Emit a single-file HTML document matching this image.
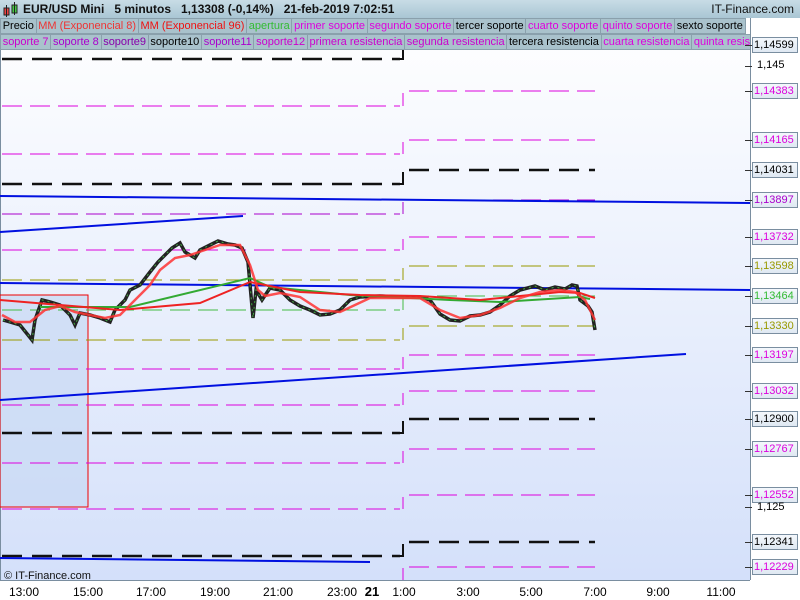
<!DOCTYPE html>
<html><head><meta charset="utf-8"><style>
*{margin:0;padding:0;box-sizing:border-box}
body{width:800px;height:600px;overflow:hidden;background:#fff;font-family:"Liberation Sans",sans-serif;position:relative}
#hdr{position:absolute;left:0;top:0;width:800px;height:18px;background:linear-gradient(#c8dce6,#a9c6d4);font-size:12px;font-weight:bold;color:#111}
#hdr .t{position:absolute;left:23px;top:2px;white-space:pre}
#hdr .r{position:absolute;right:6px;top:2px;font-weight:normal}
.row{position:absolute;left:0;height:16px;display:flex;font-size:11px}
.row span{border:1px solid #8aa0ac;background:#a9c2cc;padding:0 1.7px;line-height:14px;margin-right:-1px;white-space:nowrap}
.ax{position:absolute;left:752px;width:46px;height:16px;border:1px solid #7a8ea0;background:linear-gradient(#f4f8fc,#dfe8f2);font-size:11px;line-height:14px;padding-left:1px}
.tk{position:absolute;left:745px;width:7px;height:1px;background:#333}
.tl{position:absolute;top:585px;font-size:12px;transform:translateX(-50%)}
</style></head><body>
<div id="hdr">
<svg style="position:absolute;left:3px;top:2px" width="16" height="16"><rect x="1" y="6" width="5" height="7" fill="#e44" stroke="#222"/><line x1="3.5" y1="3" x2="3.5" y2="15" stroke="#222"/><rect x="9" y="3" width="5" height="8" fill="#4c4" stroke="#222"/><line x1="11.5" y1="0" x2="11.5" y2="13" stroke="#222"/></svg>
<div class="t">EUR/USD Mini   5 minutos   1,13308 (-0,14%)   21-feb-2019 7:02:51</div>
<div class="r">IT-Finance.com</div></div>
<svg style="position:absolute;left:0;top:18px" width="800" height="582">
<defs><linearGradient id="bg" x1="0" y1="0" x2="0" y2="1"><stop offset="0" stop-color="#ffffff"/><stop offset="1" stop-color="#d4e0fa"/></linearGradient></defs>
<rect x="0" y="0" width="750" height="562" fill="url(#bg)"/>
<line x1="0.5" y1="0" x2="0.5" y2="562" stroke="#7a8ea0"/>
<line x1="750.5" y1="0" x2="750.5" y2="562" stroke="#7a8ea0"/>
<line x1="0" y1="562.5" x2="750" y2="562.5" stroke="#7a8ea0"/>
<g transform="translate(0,-18)">
<rect x="0" y="295" width="88" height="212" fill="#c8d8f4" fill-opacity="0.7" stroke="#e00" stroke-width="1"/>
<g fill="none">
<g stroke="#111" stroke-width="2.5" stroke-dasharray="20 10"><path d="M2 59H400M2 184H400M2 433H400M2 556H400"/></g>
<g stroke="#d0d" stroke-width="1" stroke-dasharray="20 8"><path d="M2 106H400M2 154H400M2 250H400M2 369H400M2 405H400M2 463H400M2 509H400"/></g>
<path d="M2 214H400" stroke="#a0c" stroke-dasharray="20 8"/>
<path d="M2 280H400M2 340H400" stroke="#990" stroke-dasharray="20 8"/>
<path d="M2 310H400" stroke="#4b4" stroke-dasharray="20 8"/>
<g stroke="#111" stroke-width="2"><path d="M396 59H403V47M396 184H403V172M396 433H403V421M396 556H403V544"/></g>
<g stroke="#d0d"><path d="M403 106V93M403 154V142M403 250V239M403 369V357M403 405V393M403 463V451M403 509V497M403 580V568"/></g>
<path d="M403 280V268M403 340V328" stroke="#990"/><path d="M403 310V298" stroke="#4b4"/><path d="M403 214V202" stroke="#a0c"/>
<g stroke="#111" stroke-width="2.5" stroke-dasharray="20 10"><path d="M409 45H595M409 170H595M409 419H595M409 542H595"/></g>
<g stroke="#d0d" stroke-dasharray="20 8"><path d="M409 91H595M409 140H595M409 237H595M409 355H595M409 391H595M409 449H595M409 495H595M409 567H595"/></g>
<path d="M409 200H595" stroke="#a0c" stroke-dasharray="20 8"/>
<path d="M409 266H595M409 326H595" stroke="#990" stroke-dasharray="20 8"/>
<path d="M409 296H595" stroke="#4b4" stroke-dasharray="20 8"/>
<g stroke="#0010e0" stroke-width="2"><path d="M0 196L750 203M0 232L243 216M0 283L750 290M0 400L686 354M0 558L370 562"/></g>
<path d="M3 320L10 322L20 325L28 335L32 340L35 320L42 300L50 302L60 305L70 315L75 325L80 313L90 315L100 318L110 322L115 310L125 300L130 290L140 285L150 272L158 262L165 255L172 248L180 243L185 252L195 258L200 250L210 245L218 241L228 244L235 245L242 248L248 262L253 318L256 290L262 300L270 288L280 290L290 300L300 306L310 310L320 315L330 314L340 310L350 300L360 297L380 296L400 297L420 297L430 300L440 314L450 320L460 321L470 316L480 315L490 312L500 305L510 296L520 290L535 286L545 290L555 287L565 289L572 285L577 286L580 300L588 306L592 312L595 330" stroke="#222" stroke-width="3.5"/>
<path d="M3 320L10 322L20 325L28 335L32 340L35 320L42 300L50 302L60 305L70 315L75 325L80 313L90 315L100 318L110 322L115 310L125 300L130 290L140 285L150 272L158 262L165 255L172 248L180 243L185 252L195 258L200 250L210 245L218 241L228 244L235 245L242 248L248 262L253 318L256 290L262 300L270 288L280 290L290 300L300 306L310 310L320 315L330 314L340 310L350 300L360 297L380 296L400 297L420 297L430 300L440 314L450 320L460 321L470 316L480 315L490 312L500 305L510 296L520 290L535 286L545 290L555 287L565 289L572 285L577 286L580 300L588 306L592 312L595 330" stroke="#4a4" stroke-width="1" stroke-dasharray="2 4"/>
<path d="M40 307L130 307L250 278L270 287L350 295L450 300L500 302L580 297L590 299" stroke="#3a3" stroke-width="2"/>
<path d="M0 300L60 305L120 310L200 303L250 282L300 292L360 295L420 296L480 300L520 296L560 292L580 293L595 298" stroke="#e22" stroke-width="2"/>
<path d="M2 315L15 322L30 322L45 310L60 306L75 312L90 315L105 318L120 315L135 300L150 285L160 270L175 258L190 255L205 250L220 245L240 245L250 265L258 290L265 296L280 293L300 297L320 310L340 312L355 305L370 298L400 298L420 298L440 310L460 318L480 315L500 308L520 298L540 292L560 290L575 292L585 300L595 320" stroke="#f33" stroke-width="2.5" stroke-opacity="0.85"/>
</g>
</g>
<text x="4" y="561" font-size="11" fill="#111" font-family="Liberation Sans">© IT-Finance.com</text>
</g>
</svg>
<div class="row" style="top:18px"><span>Precio</span><span style="color:#e33">MM (Exponencial 8)</span><span style="color:#e11">MM (Exponencial 96)</span><span style="color:#3b3">apertura</span><span style="color:#d0d">primer soporte</span><span style="color:#d0d">segundo soporte</span><span>tercer soporte</span><span style="color:#d0d">cuarto soporte</span><span style="color:#d0d">quinto soporte</span><span>sexto soporte</span></div>
<div class="row" style="top:34px;width:750px;overflow:hidden"><span style="color:#c0c">soporte 7</span><span style="color:#a0c">soporte 8</span><span style="color:#80a">soporte9</span><span>soporte10</span><span style="color:#a0c">soporte11</span><span style="color:#c0c">soporte12</span><span style="color:#c0c">primera resistencia</span><span style="color:#c0c">segunda resistencia</span><span>tercera resistencia</span><span style="color:#d0d">cuarta resistencia</span><span style="color:#d0d">quinta resistencia</span></div>
<div class="tk" style="top:45px"></div><div class="ax" style="top:37px">1,14599</div>
<div class="tk" style="top:66px"></div><div style="position:absolute;left:757px;top:59px;font-size:11px">1,145</div>
<div class="tk" style="top:91px"></div><div class="ax" style="top:83px;color:#d0d">1,14383</div>
<div class="tk" style="top:140px"></div><div class="ax" style="top:132px;color:#d0d">1,14165</div>
<div class="tk" style="top:170px"></div><div class="ax" style="top:162px">1,14031</div>
<div class="tk" style="top:200px"></div><div class="ax" style="top:192px;color:#a0c">1,13897</div>
<div class="tk" style="top:237px"></div><div class="ax" style="top:229px;color:#d0d">1,13732</div>
<div class="tk" style="top:266px"></div><div class="ax" style="top:258px;color:#990">1,13598</div>
<div class="tk" style="top:296px"></div><div class="ax" style="top:288px;color:#3b3">1,13464</div>
<div class="tk" style="top:326px"></div><div class="ax" style="top:318px;color:#990">1,13330</div>
<div class="tk" style="top:355px"></div><div class="ax" style="top:347px;color:#d0d">1,13197</div>
<div class="tk" style="top:391px"></div><div class="ax" style="top:383px;color:#d0d">1,13032</div>
<div class="tk" style="top:419px"></div><div class="ax" style="top:411px">1,12900</div>
<div class="tk" style="top:449px"></div><div class="ax" style="top:441px;color:#d0d">1,12767</div>
<div class="tk" style="top:495px"></div><div class="ax" style="top:487px;color:#d0d">1,12552</div>
<div class="tk" style="top:507px"></div><div style="position:absolute;left:757px;top:501px;font-size:11px">1,125</div>
<div class="tk" style="top:542px"></div><div class="ax" style="top:534px">1,12341</div>
<div class="tk" style="top:567px"></div><div class="ax" style="top:559px;color:#d0d">1,12229</div>
<div class="tl" style="left:24px">13:00</div><div class="tl" style="left:88px">15:00</div><div class="tl" style="left:151px">17:00</div><div class="tl" style="left:215px">19:00</div><div class="tl" style="left:278px">21:00</div><div class="tl" style="left:342px">23:00</div><div class="tl" style="left:372px;font-weight:bold;font-size:13px;top:584px">21</div><div class="tl" style="left:404px">1:00</div><div class="tl" style="left:468px">3:00</div><div class="tl" style="left:531px">5:00</div><div class="tl" style="left:595px">7:00</div><div class="tl" style="left:658px">9:00</div><div class="tl" style="left:721px">11:00</div>
</body></html>
